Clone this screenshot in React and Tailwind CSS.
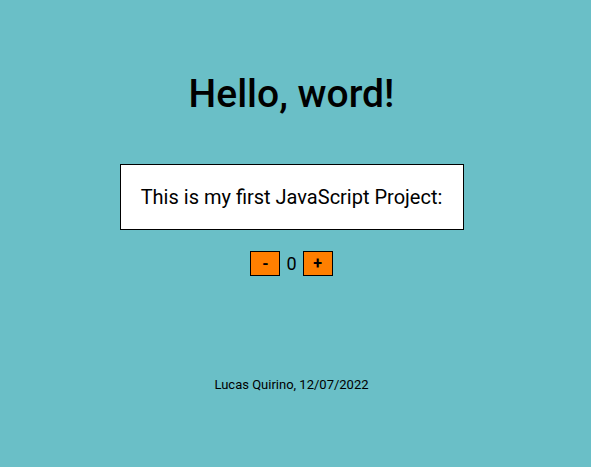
export default function App() {
  return (
    <div
      className="min-h-screen w-full bg-[#6abfc7] flex flex-col items-center text-black pr-[8px]"
      style={{ fontFamily: "Roboto, 'Liberation Sans', sans-serif" }}
    >
      <h1 className="mt-[71px] text-[39px] leading-[46px] font-medium">Hello, word!</h1>

      <div className="mt-[47px] w-[344px] h-[66px] bg-white border border-black flex items-center justify-center">
        <p className="text-[20px]">This is my first JavaScript Project:</p>
      </div>

      <div className="mt-[21px] flex items-center gap-[6px]">
        <button className="w-[30px] h-[25px] bg-[#ff7f00] border border-black text-[16px] font-bold leading-none">
          -
        </button>
        <span className="text-[18px] leading-none">0</span>
        <button className="w-[30px] h-[25px] bg-[#ff7f00] border border-black text-[16px] font-bold leading-none">
          +
        </button>
      </div>

      <p className="mt-[99px] text-[13px]">Lucas Quirino, 12/07/2022</p>
    </div>
  );
}
